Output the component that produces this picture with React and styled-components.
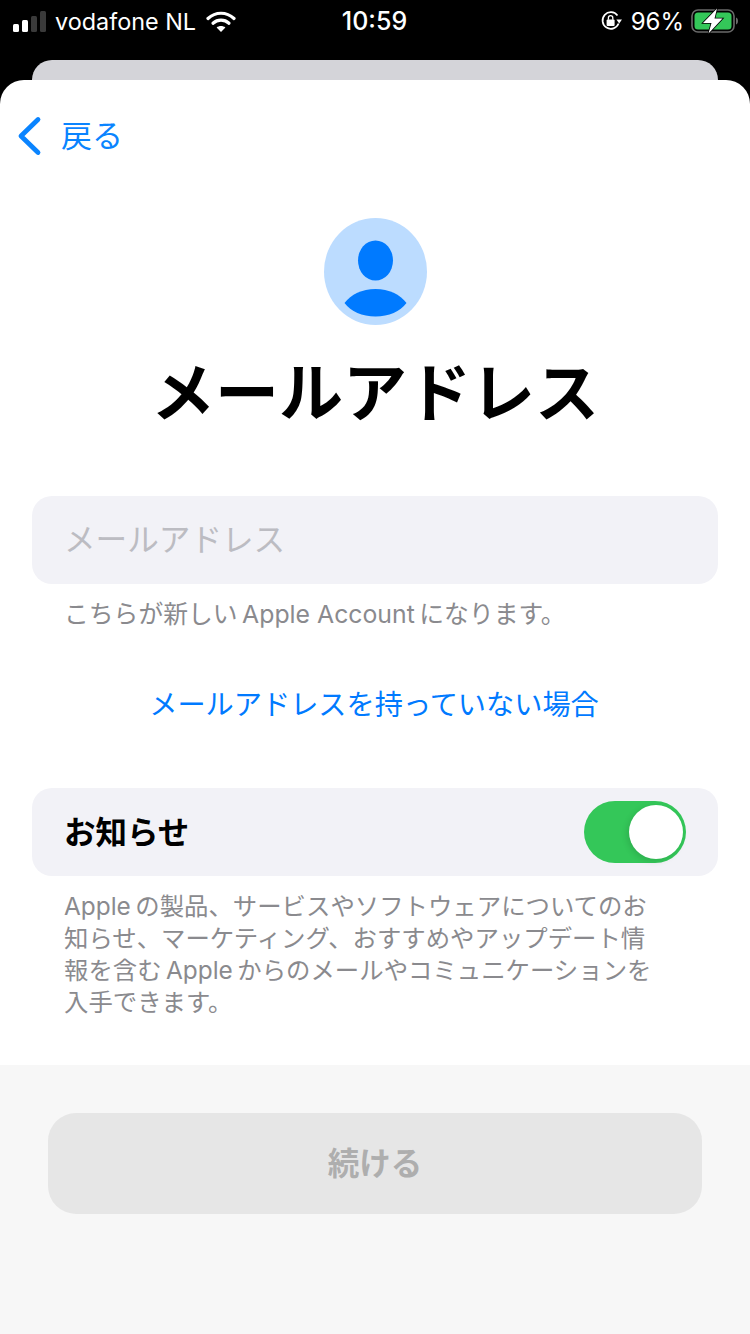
import React from 'react'
import styled, { createGlobalStyle } from 'styled-components'

const GlobalStyle = createGlobalStyle`
  html, body { margin: 0; padding: 0; background: #000; }
  body { font-family: Inter, "Noto Sans CJK JP", sans-serif; }
`

const App = () => {
  return (
    <>
      <GlobalStyle />
      <Screen>
        <StatusBar>
          <StatusLeft>
            <Signal>
              <SignalBar $h={8} $on />
              <SignalBar $h={12} $on />
              <SignalBar $h={16} />
              <SignalBar $h={21} />
            </Signal>
            <Carrier>vodafone NL</Carrier>
            <svg width="30" height="23" viewBox="0 0 30 23" fill="none">
              <path d="M2 8.5C9.5 1.5 20.5 1.5 28 8.5" stroke="#fff" strokeWidth="3.2" strokeLinecap="round" />
              <path d="M7 13.2C11.5 9.2 18.5 9.2 23 13.2" stroke="#fff" strokeWidth="3.2" strokeLinecap="round" />
              <path d="M15 22L10.6 17.4C13 15.4 17 15.4 19.4 17.4Z" fill="#fff" />
            </svg>
          </StatusLeft>
          <Clock>10:59</Clock>
          <StatusRight>
            <svg width="22" height="22" viewBox="0 0 22 22" fill="none">
              <path d="M18.6 13.5A8.3 8.3 0 1 1 17.5 5.5" stroke="#fff" strokeWidth="1.7" />
              <path d="M22 9.6H16.4L19.2 13.4Z" fill="#fff" />
              <rect x="6.6" y="9.6" width="8" height="6.4" rx="1" fill="#fff" />
              <path d="M8.4 9.8V7.8a2.2 2.2 0 0 1 4.4 0v2" stroke="#fff" strokeWidth="1.3" />
            </svg>
            <Percent>96%</Percent>
            <svg width="47" height="26" viewBox="0 0 47 26" fill="none">
              <rect x="1" y="2" width="42" height="22" rx="6" stroke="#6a6a6a" strokeWidth="1.6" />
              <rect x="3.5" y="4.5" width="37" height="17" rx="3.5" fill="#34c759" />
              <path d="M45 9.5c1.3.5 2 1.8 2 3.5s-.7 3-2 3.5Z" fill="#6a6a6a" />
              <path d="M26 0.5L12 15H20.5L17.5 25.5L31.5 10.5H23.5Z" fill="#fff" stroke="#000" strokeWidth="1.6" paintOrder="stroke" />
            </svg>
          </StatusRight>
        </StatusBar>
        <BackSheet />
        <Sheet>
          <NavBar>
            <svg width="26" height="40" viewBox="0 0 26 40" fill="none">
              <path d="M21 3.5L4 20L21 36.5" stroke="#0a84ff" strokeWidth="4.8" strokeLinecap="round" strokeLinejoin="round" />
            </svg>
            <BackLabel>戻る</BackLabel>
          </NavBar>
          <Avatar>
            <svg width="103" height="107" viewBox="0 0 103 107">
              <ellipse cx="51.5" cy="53.5" rx="51.5" ry="53.5" fill="#bcdcff" />
              <ellipse cx="51.5" cy="42.5" rx="17.5" ry="20" fill="#007aff" />
              <path d="M20.5 85C27 76.5 38 71 51.5 71S76 76.5 82.5 85C76 93.5 65 98.5 51.5 98.5S27 93.5 20.5 85Z" fill="#007aff" />
            </svg>
          </Avatar>
          <Title>メールアドレス</Title>
          <Field>
            <Placeholder>メールアドレス</Placeholder>
          </Field>
          <Hint>こちらが新しい{'\u2009'}Apple Account{'\u2009'}になります。</Hint>
          <Link>メールアドレスを持っていない場合</Link>
          <ToggleRow>
            <ToggleLabel>お知らせ</ToggleLabel>
            <Switch>
              <Knob />
            </Switch>
          </ToggleRow>
          <Description>
            Apple{'\u2009'}の製品、サービスやソフトウェアについてのお<br />
            知らせ、マーケティング、おすすめやアップデート情<br />
            報を含む{'\u2009'}Apple{'\u2009'}からのメールやコミュニケーションを<br />
            入手できます。
          </Description>
        </Sheet>
        <Footer>
          <ContinueButton>続ける</ContinueButton>
        </Footer>
      </Screen>
    </>
  )
}

export default App

const Screen = styled.div`
  width: 750px;
  height: 1334px;
  overflow: hidden;
  background: #000;
  display: flex;
  flex-direction: column;
`
const StatusBar = styled.div`
  height: 60px;
  padding: 0 12px 18px 13px;
  display: grid;
  grid-template-columns: 1fr auto 1fr;
  align-items: center;
  color: #fff;
  box-sizing: border-box;
`
const StatusLeft = styled.div`
  display: flex;
  align-items: center;
  gap: 9px;
`
const Signal = styled.div`
  display: flex;
  align-items: flex-end;
  gap: 3px;
  height: 21px;
`
const SignalBar = styled.div`
  width: 6px;
  height: ${({ $h }) => $h}px;
  border-radius: 1.5px;
  background: ${({ $on }) => ($on ? '#fff' : '#3a3a3a')};
`
const Carrier = styled.span`
  font-size: 23.4px;
  margin-right: 1px;
`
const Clock = styled.span`
  font-size: 25px;
  font-weight: 500;
  margin-right: 2px;
`
const StatusRight = styled.div`
  display: flex;
  align-items: center;
  justify-content: flex-end;
  gap: 9px;
`
const Percent = styled.span`
  font-size: 24px;
  margin-right: -2px;
`
const BackSheet = styled.div`
  height: 20px;
  margin: 0 32px;
  flex: none;
  background: #d4d4d9;
  border-radius: 20px 20px 0 0;
`
const Sheet = styled.div`
  height: 985px;
  flex: none;
  background: #fff;
  border-radius: 24px 24px 0 0;
  padding: 0 32px;
  box-sizing: border-box;
  display: flex;
  flex-direction: column;
`
const NavBar = styled.div`
  height: 40px;
  margin: 36px 0 0 -15px;
  display: flex;
  align-items: center;
  gap: 18px;
`
const BackLabel = styled.span`
  font-size: 31px;
  color: #0a84ff;
  padding-bottom: 6px;
`
const Avatar = styled.div`
  margin-top: 62px;
  height: 107px;
  display: flex;
  justify-content: center;
`
const Title = styled.h1`
  margin: 22px 0 0;
  height: 92px;
  line-height: 92px;
  font-size: 64px;
  font-weight: 700;
  text-align: center;
  color: #000;
`
const Field = styled.div`
  margin-top: 57px;
  height: 88px;
  border-radius: 20px;
  background: #f2f2f7;
  padding: 0 32px 6px;
  box-sizing: border-box;
  display: flex;
  align-items: center;
`
const Placeholder = styled.span`
  font-size: 31.6px;
  color: #bcbcc2;
`
const Hint = styled.p`
  margin: 13px 0 0 32px;
  height: 34px;
  line-height: 34px;
  font-size: 24.8px;
  color: #8a8a8e;
`
const Link = styled.div`
  margin-top: 54px;
  padding-right: 2px;
  height: 40px;
  line-height: 40px;
  font-size: 28.2px;
  color: #007aff;
  text-align: center;
`
const ToggleRow = styled.div`
  margin-top: 63px;
  height: 88px;
  border-radius: 20px;
  background: #f2f2f7;
  padding: 0 32px;
  display: flex;
  align-items: center;
  justify-content: space-between;
`
const ToggleLabel = styled.span`
  font-size: 31.5px;
  font-weight: 700;
  color: #000;
  padding-bottom: 4px;
`
const Switch = styled.div`
  width: 102px;
  height: 62px;
  border-radius: 31px;
  background: #34c759;
  display: flex;
  align-items: center;
  justify-content: flex-end;
  padding: 0 3px;
  box-sizing: border-box;
`
const Knob = styled.div`
  width: 54px;
  height: 54px;
  border-radius: 50%;
  background: #fff;
  box-shadow: -2px 2px 6px rgba(0, 0, 0, 0.12);
`
const Description = styled.p`
  margin: 14px 0 0 32px;
  font-size: 24.4px;
  line-height: 32px;
  color: #8a8a8e;
  white-space: nowrap;
`
const Footer = styled.div`
  flex: 1;
  background: #f7f7f7;
  padding: 48px 48px 0;
`
const ContinueButton = styled.div`
  height: 101px;
  padding-bottom: 5px;
  box-sizing: border-box;
  border-radius: 28px;
  background: #e6e6e6;
  color: #aeaeae;
  font-size: 31.5px;
  font-weight: 700;
  display: flex;
  align-items: center;
  justify-content: center;
`
